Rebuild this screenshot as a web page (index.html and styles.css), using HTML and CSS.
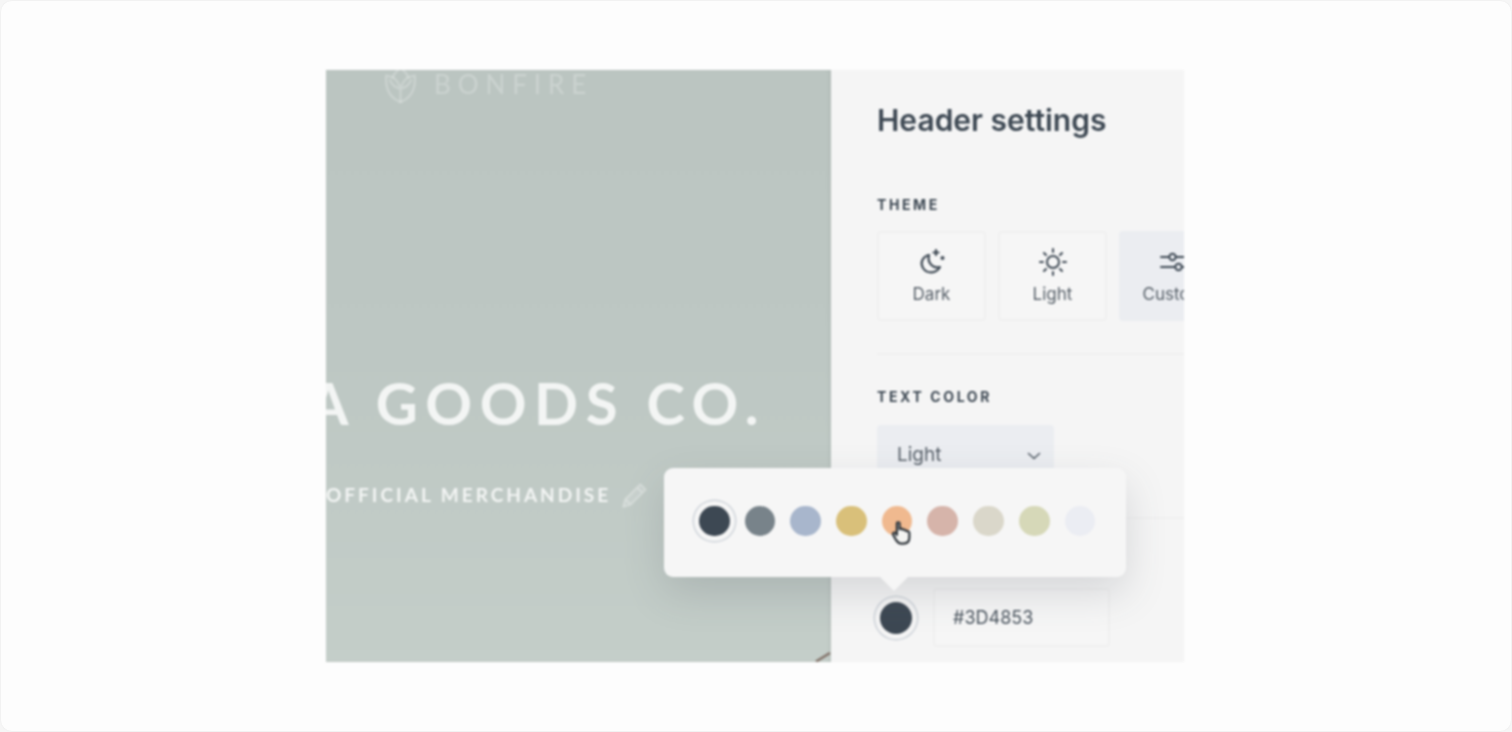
FILE: index.html
```html
<!DOCTYPE html>
<html lang="en">
<head>
<meta charset="utf-8">
<title>Header settings</title>
<link rel="stylesheet" href="styles.css">
</head>
<body>
<main class="card">
  <div class="stage">
    <section class="hero">
      <div class="logo">
        <svg class="logo-mark" viewBox="0 0 34 40" fill="none" stroke="currentColor" stroke-width="2.4" stroke-linejoin="round" stroke-linecap="round">
          <path d="M17 2 C21 5 24 8 25 12 L32 10 C33 22 30 33 17 38 C4 33 1 22 2 10 L9 12 C10 8 13 5 17 2Z"/>
          <path d="M17 38 V24 M17 24 C12 23 8 20 6 15 M17 24 C22 23 26 20 28 15 M9 12 C12 14 15 17 17 24 C19 17 22 14 25 12"/>
        </svg>
        <span class="logo-text">BONFIRE</span>
      </div>
      <h2 class="hero-title">A GOODS CO.</h2>
      <div class="hero-sub">
        <span>OFFICIAL MERCHANDISE</span>
        <svg class="pencil" viewBox="0 0 28 28" fill="rgba(255,255,255,.14)" stroke="currentColor" stroke-width="1.9" stroke-linejoin="round">
          <path d="M3 25 L5 18 L19 4 L24 9 L10 23 Z M16 7 L21 12 M5 18 L10 23"/>
        </svg>
      </div>
      <svg class="corner-mark" viewBox="0 0 16 10" fill="none" stroke="#85766d" stroke-width="2.6"><path d="M1 9.5 L15 1"/></svg>
    </section>

    <aside class="panel">
      <h1 class="panel-title">Header settings</h1>
      <h3 class="label label-theme">THEME</h3>
      <div class="themes">
        <div class="theme">
          <svg class="theme-icon" viewBox="0 0 28 28" fill="none" stroke="currentColor" stroke-width="2.2" stroke-linecap="round" stroke-linejoin="round">
            <path d="M11 7 C4 9 2 15 5 20 C9 26 18 26 22 19 C15 21 9 15 11 7Z"/>
            <path d="M18 2 V7 M15.5 4.5 H20.5"/>
            <circle cx="24.5" cy="10" r=".9"/>
          </svg>
          <span>Dark</span>
        </div>
        <div class="theme">
          <svg class="theme-icon" viewBox="0 0 28 28" fill="none" stroke="currentColor" stroke-width="2" stroke-linecap="round">
            <circle cx="14" cy="14" r="6"/>
            <path d="M14 1 V4 M14 24 V27 M1 14 H4 M24 14 H27 M5 5 L7 7 M21 21 L23 23 M23 5 L21 7 M7 21 L5 23"/>
          </svg>
          <span>Light</span>
        </div>
        <div class="theme theme-active">
          <svg class="theme-icon" viewBox="0 0 28 28" fill="none" stroke="currentColor" stroke-width="2" stroke-linecap="round">
            <path d="M1 9 H9 M16 9 H27 M1 19 H15 M22 19 H27"/>
            <circle cx="12.5" cy="9" r="3.2"/>
            <circle cx="18.5" cy="19" r="3.2"/>
          </svg>
          <span>Custom</span>
        </div>
      </div>
      <hr class="rule rule-theme">
      <h3 class="label label-text">TEXT COLOR</h3>
      <div class="select">
        <span>Light</span>
        <svg class="chevron" viewBox="0 0 14 8" fill="none" stroke="currentColor" stroke-width="1.6" stroke-linecap="round" stroke-linejoin="round"><path d="M1.5 1.5 L7 6.5 L12.5 1.5"/></svg>
      </div>
      <hr class="rule rule-select">
      <div class="color-row">
        <span class="current-ring"></span>
        <div class="hex">#3D4853</div>
      </div>
    </aside>

    <div class="popover">
      <span class="swatch swatch-selected c1"></span>
      <span class="swatch c2"></span>
      <span class="swatch c3"></span>
      <span class="swatch c4"></span>
      <span class="swatch c5">
        <svg class="hand" viewBox="0 0 22 26">
          <path d="M6 2.5 C6 1 9 1 9 2.5 V9 C9.5 8 12 8 12.5 9.5 C13.5 9 15.5 9.5 16 11 C17 10.5 19.5 11 19.5 13 V18 C19.5 22 17 24.5 13 24.5 H11 C8 24.5 6.5 23 5 20.5 L2 15 C1 13 3.5 11.5 5 13.5 L6 15 Z" fill="#f4f4f2" stroke="#30363c" stroke-width="2.4" stroke-linejoin="round"/>
        </svg>
      </span>
      <span class="swatch c6"></span>
      <span class="swatch c7"></span>
      <span class="swatch c8"></span>
      <span class="swatch c9"></span>
    </div>
  </div>
</main>
</body>
</html>
```

FILE: styles.css
```css
* { box-sizing: border-box; }

html, body {
  margin: 0;
  height: 100%;
  background: #f6f6f6;
}

body {
  overflow: hidden;
  font-family: "Inter", "Liberation Sans", sans-serif;
}

.card {
  height: 732px;
  display: flex;
  align-items: center;
  justify-content: center;
  padding-right: 2px;
  background: #fdfdfd;
  border: 1px solid #f2f2f2;
  border-radius: 12px;
}

.stage {
  position: relative;
  display: flex;
  width: 858px;
  height: 592px;
  overflow: hidden;
  filter: blur(0.8px);
}

/* Hero */
.hero {
  position: relative;
  display: flex;
  flex-direction: column;
  flex: 0 0 505px;
  overflow: hidden;
  background: linear-gradient(180deg, #bbc5c1 0%, #bdc7c3 45%, #c4cec9 100%);
  box-shadow: inset -3px 0 4px -2px rgba(120, 130, 125, .18);
  font-family: "Lato", "Open Sans", sans-serif;
  color: #f3f5f4;
}

.logo {
  display: flex;
  align-items: center;
  gap: 17px;
  height: 28px;
  margin: 0 0 0 58px;
  color: rgba(255, 255, 255, .24);
}

.logo-mark {
  flex: none;
  width: 33px;
  height: 38px;
  margin-top: 2px;
}

.logo-text {
  font-size: 26px;
  font-weight: 400;
  letter-spacing: 6.9px;
  line-height: 28px;
}

.hero-title {
  align-self: flex-end;
  margin: 273px 65px 0 0;
  font-size: 58px;
  font-weight: 700;
  line-height: 64px;
  letter-spacing: 7.5px;
  white-space: nowrap;
}

.hero-sub {
  display: flex;
  align-items: center;
  gap: 9px;
  margin: 45px 0 0 0;
  font-size: 19px;
  font-weight: 700;
  line-height: 28px;
  letter-spacing: 3px;
  white-space: nowrap;
}

.pencil {
  width: 30px;
  height: 30px;
  color: rgba(255, 255, 255, .3);
}

.corner-mark {
  position: absolute;
  right: 0;
  bottom: 0;
  width: 16px;
  height: 10px;
}

/* Panel */
.panel {
  flex: 1;
  min-width: 0;
  padding: 30px 0 0 46px;
  overflow: hidden;
  background: #f5f5f5;
  color: #3d4853;
}

.panel-title {
  margin: 0;
  font-size: 30px;
  font-weight: 600;
  line-height: 40px;
  letter-spacing: 0;
  white-space: nowrap;
}

.label {
  margin: 0;
  font-size: 14px;
  font-weight: 700;
  line-height: 16px;
  letter-spacing: 2.6px;
}

.label-theme { margin-top: 57px; }
.label-text { margin-top: 34px; }

.themes {
  display: flex;
  gap: 12px;
  width: 400px;
  margin-top: 18px;
}

.theme {
  display: flex;
  flex: none;
  flex-direction: column;
  align-items: center;
  width: 109px;
  height: 90px;
  padding-top: 15px;
  border: 2px solid #f0f0f0;
  border-radius: 4px;
  background: #f6f6f6;
  color: #555e67;
  font-size: 17px;
  line-height: 24px;
}

.theme-active {
  border-color: #ebedf1;
  background: #ebedf1;
}

.theme-icon {
  width: 28px;
  height: 28px;
  margin-bottom: 6px;
  color: #3d4853;
}

.rule {
  width: 400px;
  height: 2px;
  margin: 0;
  border: 0;
  background: #f0f0f0;
}

.rule-theme { margin-top: 32px; }
.rule-select { margin-top: 34px; }

.select {
  display: flex;
  align-items: center;
  justify-content: space-between;
  width: 177px;
  height: 58px;
  margin-top: 20px;
  padding: 0 13px 0 20px;
  border-radius: 4px;
  background: #ebedf1;
  color: #555e67;
  font-size: 19px;
}

.chevron {
  width: 14px;
  height: 8px;
  margin-top: 4px;
}

.color-row {
  display: flex;
  align-items: center;
  gap: 15px;
  margin-top: 69px;
}

.current-ring {
  display: block;
  width: 32px;
  height: 32px;
  margin: 0 0 0 3px;
  border-radius: 50%;
  background: #3d4853;
  box-shadow: 0 0 0 5px #f5f5f5, 0 0 0 6.5px #cfd4da;
}

.hex {
  width: 177px;
  height: 59px;
  margin-left: 6px;
  padding-left: 18px;
  border: 2px solid #f0f0f0;
  border-radius: 4px;
  background: #f6f6f6;
  color: #4a545e;
  font-size: 18px;
  line-height: 55px;
}

/* Popover */
.popover {
  position: absolute;
  top: 398px;
  left: 338px;
  display: flex;
  align-items: center;
  gap: 15px;
  width: 462px;
  height: 109px;
  padding: 0 0 3px 35px;
  border-radius: 9px;
  background: #f6f6f6;
  box-shadow: 0 16px 40px rgba(70, 80, 90, .18);
}

.popover::after {
  content: "";
  position: absolute;
  left: 216px;
  bottom: -14px;
  width: 0;
  height: 0;
  border-left: 14px solid transparent;
  border-right: 14px solid transparent;
  border-top: 14px solid #f6f6f6;
}

.swatch {
  position: relative;
  flex: none;
  width: 30.7px;
  height: 30.7px;
  border-radius: 50%;
}

.swatch-selected { box-shadow: 0 0 0 5px #f6f6f6, 0 0 0 6.5px #cfd4da; }

.c1 { background: #3d4853; }
.c2 { background: #78838a; }
.c3 { background: #a8b6cc; }
.c4 { background: #d9c07a; }
.c5 { background: #f0b98f; }
.c6 { background: #d6b4aa; }
.c7 { background: #dad7ca; }
.c8 { background: #d6d8b8; }
.c9 { background: #ebedf3; }

.hand {
  position: absolute;
  left: 9px;
  top: 15px;
  width: 21px;
  height: 24px;
}
```
